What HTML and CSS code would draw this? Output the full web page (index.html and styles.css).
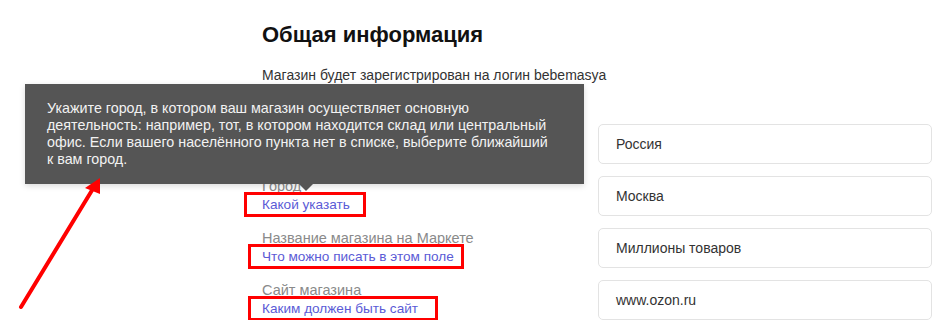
FILE: index.html
```html
<!DOCTYPE html>
<html lang="ru">
<head>
<meta charset="UTF-8">
<meta name="viewport" content="width=device-width, initial-scale=1.0">
<title>Общая информация</title>
<link rel="stylesheet" href="styles.css">
</head>
<body>
<div class="page">
    <h1 class="title">Общая информация</h1>
    <p class="subtitle">Магазин будет зарегистрирован на логин bebemasya</p>

    <div class="form">
        <!-- first label is covered by the tooltip -->
        <div class="field-label"></div>
        <div class="input">Россия</div>

        <div class="field-label">
            <div class="label">Город</div>
            <a href="#" class="hint hint-city">Какой указать</a>
        </div>
        <div class="input">Москва</div>

        <div class="field-label">
            <div class="label">Название магазина на Маркете</div>
            <a href="#" class="hint hint-name">Что можно писать в этом поле</a>
        </div>
        <div class="input">Миллионы товаров</div>

        <div class="field-label">
            <div class="label">Сайт магазина</div>
            <a href="#" class="hint hint-site">Каким должен быть сайт</a>
        </div>
        <div class="input">www.ozon.ru</div>
    </div>
</div>

<!-- Tooltip for "Какой указать" -->
<div class="tooltip">
    <p class="tooltip-text">Укажите город, в котором ваш магазин осуществляет основную деятельность: например, тот, в котором находится склад или центральный офис. Если вашего населённого пункта нет в списке, выберите ближайший к вам город.</p>
</div>

<!-- Annotation arrow -->
<svg class="annotation" width="939" height="331" viewBox="0 0 939 331">
    <line x1="21" y1="307" x2="94" y2="187" stroke="#ff0000" stroke-width="4" stroke-linecap="round"/>
    <polygon points="100,178 85,188 100,194" fill="#ff0000"/>
</svg>
</body>
</html>
```

FILE: styles.css
```css
body {
    margin: 0;
    font-family: "Liberation Sans", Arial, sans-serif;
    background-color: #fff;
    color: #333;
}
.page {
    padding: 22px 0 0 262px;
}
.title {
    margin: 0;
    font-size: 22px;
    line-height: 26px;
    font-weight: bold;
    color: #111;
}
.subtitle {
    margin: 17px 0 0;
    font-size: 14px;
    line-height: 20px;
    color: #333;
}
.form {
    display: grid;
    grid-template-columns: 336px 334px;
    grid-auto-rows: 40px;
    row-gap: 12px;
    margin-top: 39px;
}
.field-label {
    display: flex;
    flex-direction: column;
    align-items: flex-start;
}
.label {
    font-size: 14.5px;
    line-height: 20px;
    color: #8a8a8a;
}
.hint {
    display: inline-block;
    margin-top: -4px;
    font-size: 13.6px;
    line-height: 19px;
    color: #5b5bd6;
    text-decoration: none;
    border: 3px solid #ff0000;
}
.hint-city {
    margin-left: -18px;
    padding: 0 13px 0 15px;
}
.hint-name {
    margin-left: -14px;
    padding: 0 7px 0 11px;
}
.hint-site {
    margin-left: -14px;
    padding: 0 17px 0 11px;
}
.input {
    box-sizing: border-box;
    height: 40px;
    padding: 0 17px;
    border: 1px solid #e3e3e3;
    border-radius: 5px;
    font-size: 14px;
    line-height: 38px;
    color: #333;
}
.tooltip {
    position: absolute;
    top: 84px;
    left: 25px;
    box-sizing: border-box;
    width: 559px;
    height: 100px;
    padding: 16px 22px;
    background-color: #555;
    box-shadow: 0 2px 6px rgba(0, 0, 0, 0.15);
}
.tooltip::after {
    content: "";
    position: absolute;
    left: 274px;
    bottom: -7px;
    border-left: 7px solid transparent;
    border-right: 7px solid transparent;
    border-top: 7px solid #555;
}
.tooltip-text {
    margin: 0;
    max-width: 507px;
    font-size: 14.3px;
    line-height: 17px;
    color: #f2f2f2;
}
.annotation {
    position: absolute;
    top: 0;
    left: 0;
    pointer-events: none;
}
```
